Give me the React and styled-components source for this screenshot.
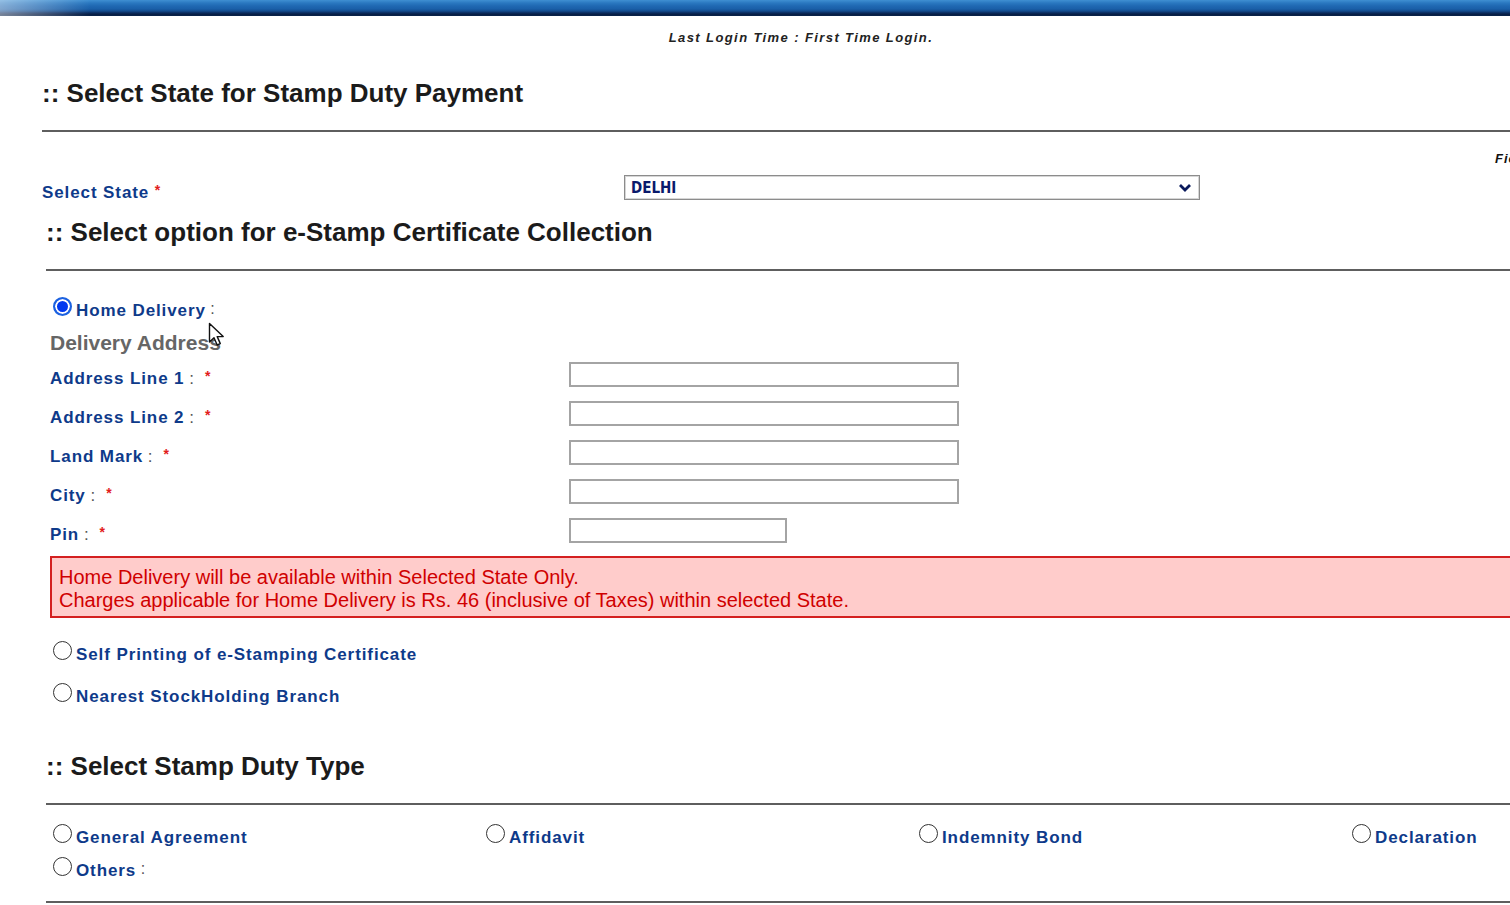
import React from "react";
import styled, { createGlobalStyle } from "styled-components";

const GlobalStyle = createGlobalStyle`
  html, body {
    margin: 0;
    padding: 0;
    background: #ffffff;
    overflow: hidden;
  }
  body {
    font-family: "Liberation Sans", Arial, sans-serif;
  }
`;

const addressFields = [
  { label: "Address Line 1", width: 390 },
  { label: "Address Line 2", width: 390 },
  { label: "Land Mark", width: 390 },
  { label: "City", width: 390 },
  { label: "Pin", width: 218 },
];

const dutyTypes = ["General Agreement", "Affidavit", "Indemnity Bond", "Declaration", "Others"];

const App = () => {
  return (
    <Page>
      <GlobalStyle />
      <TopBar />
      <LoginInfo>Last Login Time : First Time Login.</LoginInfo>
      <Content>
        <SectionTitle>:: Select State for Stamp Duty Payment</SectionTitle>
        <Rule />
        <MandatoryNote>Fields marked with * are mandatory</MandatoryNote>
        <StateRow>
          <FieldLabel>
            Select State <Req>*</Req>
          </FieldLabel>
          <SelectBox>
            <span>DELHI</span>
            <svg width="14" height="10" viewBox="0 0 14 10">
              <path d="M2 2 L7 7 L12 2" fill="none" stroke="#0a1a5c" strokeWidth="2.8" />
            </svg>
          </SelectBox>
        </StateRow>

        <SectionTitle $indent $top={17}>
          :: Select option for e-Stamp Certificate Collection
        </SectionTitle>
        <Rule $indent />

        <Options>
          <RadioRow $top={26}>
            <Radio $checked />
            <RadioText>Home Delivery</RadioText>
            <Colon>&nbsp;:</Colon>
          </RadioRow>
          <SubHeading>Delivery Address</SubHeading>
          <AddressGrid>
            {addressFields.map((f) => (
              <AddressRow key={f.label}>
                <FieldLabel $compact>
                  {f.label}
                  <Colon>&nbsp;:</Colon>
                  <Req $gap>*</Req>
                </FieldLabel>
                <TextInput $w={f.width} />
              </AddressRow>
            ))}
          </AddressGrid>
          <Alert>
            Home Delivery will be available within Selected State Only.
            <br />
            Charges applicable for Home Delivery is Rs. 46 (inclusive of Taxes) within selected State.
          </Alert>
          <RadioRow $top={23}>
            <Radio />
            <RadioText>Self Printing of e-Stamping Certificate</RadioText>
          </RadioRow>
          <RadioRow $top={18}>
            <Radio />
            <RadioText>Nearest StockHolding Branch</RadioText>
          </RadioRow>
        </Options>

        <SectionTitle $indent $top={44}>:: Select Stamp Duty Type</SectionTitle>
        <Rule $indent />
        <TypeGrid>
          {dutyTypes.map((t) => (
            <TypeItem key={t}>
              <Radio />
              <RadioText>{t}</RadioText>
              {t === "Others" && <Colon>&nbsp;:</Colon>}
            </TypeItem>
          ))}
        </TypeGrid>
        <Rule $indent $top={20} />
      </Content>

      <Cursor width="20" height="26" viewBox="0 0 20 26">
        <path
          d="M1.5 1.5 L1.5 20 L6 15.8 L9.2 23 L12.3 21.6 L9.2 14.6 L15.2 14.6 Z"
          fill="#ffffff"
          stroke="#111111"
          strokeWidth="1.4"
          strokeLinejoin="round"
        />
      </Cursor>
    </Page>
  );
};

// Styled Components
const Page = styled.div`
  position: relative;
  width: 1510px;
  height: 905px;
  overflow: hidden;
  background: #ffffff;
`;

const TopBar = styled.div`
  height: 16px;
  background:
    linear-gradient(to right, rgba(255, 255, 255, 0.45), rgba(255, 255, 255, 0) 90px),
    linear-gradient(
      to bottom,
      #3f8fd2 0px,
      #2a78c0 3px,
      #1f68b2 6px,
      #1a5fa8 9px,
      #134c8e 11px,
      #0a2a5c 13px,
      #061a3e 15px,
      #0b2a55 16px
    );
`;

const LoginInfo = styled.div`
  margin-top: 14px;
  line-height: 16px;
  text-align: center;
  padding-left: 92px;
  font-size: 13px;
  font-style: italic;
  font-weight: bold;
  letter-spacing: 1.4px;
  color: #222222;
`;

const Content = styled.div`
  width: 1720px;
  padding-left: 42px;
`;

const SectionTitle = styled.h2`
  margin: ${(p) => (p.$top ?? 32)}px 0 0 ${(p) => (p.$indent ? 4 : 0)}px;
  line-height: 30px;
  font-size: 26px;
  font-weight: bold;
  color: #1b1b1b;
  white-space: nowrap;
`;

const Rule = styled.div`
  margin: ${(p) => (p.$top ?? 22)}px 0 0 ${(p) => (p.$indent ? 4 : 0)}px;
  height: 2px;
  background: #5e5e5e;
`;

const MandatoryNote = styled.div`
  margin: 19px 0 0 1453px;
  line-height: 16px;
  font-size: 13px;
  font-style: italic;
  font-weight: bold;
  letter-spacing: 1px;
  color: #111111;
  white-space: nowrap;
`;

const StateRow = styled.div`
  display: grid;
  grid-template-columns: 582px 576px;
  align-items: end;
  margin-top: 8px;
`;

const FieldLabel = styled.label`
  line-height: 20px;
  font-size: 17px;
  font-weight: bold;
  letter-spacing: 0.9px;
  color: #0e3a8a;
  white-space: nowrap;
  margin-bottom: ${(p) => (p.$compact ? -2 : -3)}px;
`;

const Req = styled.span`
  position: relative;
  top: -3px;
  margin-left: ${(p) => (p.$gap ? 11 : 0)}px;
  font-size: 14px;
  color: #e21c1c;
  letter-spacing: 0;
`;

const Colon = styled.span`
  font-weight: normal;
  color: #555555;
  letter-spacing: 0;
`;

const SelectBox = styled.div`
  box-sizing: border-box;
  height: 25px;
  border: 1px solid #8c8c8c;
  box-shadow: inset 0 0 0 1px #d6d6d6;
  display: flex;
  align-items: center;
  justify-content: space-between;
  padding: 0 7px 0 6px;
  font-family: "DejaVu Sans Condensed", "DejaVu Sans", sans-serif;
  font-size: 15px;
  font-weight: bold;
  color: #0a1a6c;
`;

const Options = styled.div`
  padding-left: 8px;
`;

const RadioRow = styled.div`
  display: flex;
  align-items: center;
  height: 24px;
  margin-top: ${(p) => p.$top}px;
`;

const Radio = styled.span`
  box-sizing: border-box;
  flex: none;
  width: 19px;
  height: 19px;
  margin: 0 4px -2px 3px;
  align-self: flex-start;
  border-radius: 50%;
  border: ${(p) => (p.$checked ? "2px solid #1b62e0" : "1.6px solid #333333")};
  background: ${(p) => (p.$checked ? "#0038f0" : "#ffffff")};
  box-shadow: ${(p) => (p.$checked ? "inset 0 0 0 2px #ffffff" : "none")};
`;

const RadioText = styled.span`
  font-size: 17px;
  font-weight: bold;
  letter-spacing: 0.9px;
  color: #0e3a8a;
  white-space: nowrap;
  padding-top: 3px;
`;

const SubHeading = styled.div`
  margin-top: 9px;
  line-height: 26px;
  font-size: 21px;
  font-weight: bold;
  color: #666666;
`;

const AddressGrid = styled.div`
  display: flex;
  flex-direction: column;
  gap: 14px;
  margin-top: 6px;
`;

const AddressRow = styled.div`
  display: grid;
  grid-template-columns: 519px auto;
  align-items: end;
  height: 25px;
`;

const TextInput = styled.div`
  box-sizing: border-box;
  width: ${(p) => p.$w}px;
  height: 25px;
  border: 2px solid #a4a4a4;
  background: #ffffff;
`;

const Alert = styled.div`
  box-sizing: border-box;
  margin-top: 13px;
  height: 62px;
  padding: 8px 0 0 7px;
  background: #ffcccb;
  border: 2px solid #d42020;
  font-size: 20px;
  line-height: 23px;
  color: #d00000;
  white-space: nowrap;
`;

const TypeGrid = styled.div`
  display: grid;
  grid-template-columns: repeat(4, 433px);
  row-gap: 9px;
  margin: 19px 0 0 8px;
`;

const TypeItem = styled.div`
  display: flex;
  align-items: center;
  height: 24px;
`;

const Cursor = styled.svg`
  position: absolute;
  left: 208px;
  top: 322px;
`;

export default App;
